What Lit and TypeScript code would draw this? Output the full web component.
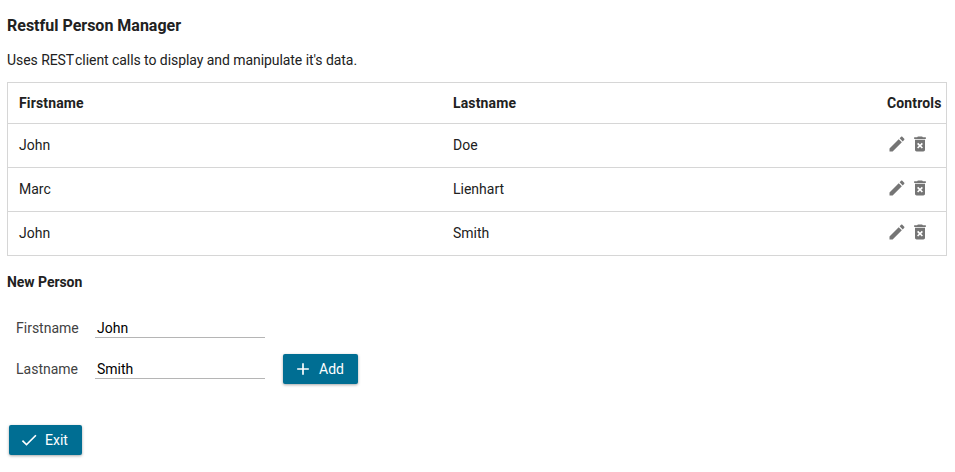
import { LitElement, html, css, svg } from "lit";
import { customElement } from "lit/decorators.js";

const paths = {
  edit: "M3 17.25V21h3.75L17.81 9.94l-3.75-3.75L3 17.25zM20.71 7.04c.39-.39.39-1.02 0-1.41l-2.34-2.34c-.39-.39-1.02-.39-1.41 0l-1.83 1.83 3.75 3.75 1.83-1.83z",
  remove: "M6 19c0 1.1.9 2 2 2h8c1.1 0 2-.9 2-2V7H6v12zm2.46-7.12l1.41-1.41L12 12.59l2.12-2.12 1.41 1.41L13.41 14l2.12 2.12-1.41 1.41L12 15.41l-2.12 2.12-1.41-1.41L10.59 14l-2.13-2.12zM15.5 4l-1-1h-5l-1 1H5v2h14V4z",
  add: "M19 13h-6v6h-2v-6H5v-2h6V5h2v6h6v2z",
  check: "M9 16.17L4.83 12l-1.42 1.41L9 19 21 7l-1.41-1.41z",
};

const icon = (name: keyof typeof paths) =>
  html`<svg class="icon" viewBox="0 0 24 24">${svg`<path d=${paths[name]}></path>`}</svg>`;

const people = [
  ["John", "Doe"],
  ["Marc", "Lienhart"],
  ["John", "Smith"],
];

@customElement("app-root")
export class AppRoot extends LitElement {
  static styles = css`
    :host {
      display: block;
      box-sizing: border-box;
      height: 472px;
      overflow: hidden;
      padding: 16px 8px 0 7px;
      background: #fff;
      color: #212121;
      font: 14px/20px Roboto, sans-serif;
    }
    h1 { margin: 0; font-size: 16px; line-height: 20px; font-weight: 700; }
    h2 { margin: 16px 0 0; font-size: 14px; line-height: 20px; font-weight: 700; letter-spacing: -0.05px; }
    p { margin: 14px 0 12px; line-height: 20px; letter-spacing: -0.06px; }
    .caps { margin-right: -2.5px; }
    .table { border: 1px solid #d6d6d6; width: 938px; }
    .row {
      display: grid;
      grid-template-columns: 434px 434px 1fr;
      align-items: center;
      box-sizing: border-box;
      height: 44px;
      padding: 0 0 2px 11px;
      border-top: 1px solid #d6d6d6;
    }
    .head { height: 40px; padding-bottom: 0; border-top: 0; font-weight: 700; letter-spacing: 0.15px; }
    .controls { display: flex; gap: 3px; padding-bottom: 2px; }
    .icon { display: block; width: 20px; height: 20px; fill: #757575; }
    .form {
      display: grid;
      grid-template-columns: 79px 170px auto;
      justify-content: start;
      align-items: center;
      grid-auto-rows: 41px;
      margin: 15px 0 0 9px;
    }
    label { color: #424242; }
    input {
      box-sizing: border-box;
      width: 170px;
      height: 20px;
      margin: 0;
      padding: 1px 2px 0;
      border: 0;
      border-bottom: 1px solid #b5b5b5;
      border-radius: 0;
      outline: 0;
      background: none;
      color: #000;
      font: 14px/18px Roboto, sans-serif;
    }
    button {
      display: flex;
      align-items: center;
      gap: 6px;
      height: 30px;
      margin: 0;
      padding: 0 14px 0 10px;
      border: 0;
      border-radius: 2px;
      background: #006e93;
      color: #fff;
      font: 14px/20px Roboto, sans-serif;
      box-shadow: 0 1px 3px rgba(0, 0, 0, 0.35);
    }
    button .icon { fill: #fff; }
    .add { width: 75px; margin-left: 18px; }
    .exit { width: 73px; margin: 36px 0 0 2px; }
  `;

  render() {
    return html`
      <h1>Restful Person Manager</h1>
      <p>Uses <span class="caps">REST</span> client calls to display and manipulate it's data.</p>
      <div class="table">
        <div class="row head"><span>Firstname</span><span>Lastname</span><span>Controls</span></div>
        ${people.map(
          ([first, last]) => html`<div class="row">
            <span>${first}</span><span>${last}</span>
            <span class="controls">${icon("edit")}${icon("remove")}</span>
          </div>`
        )}
      </div>
      <h2>New Person</h2>
      <div class="form">
        <label>Firstname</label><input .value=${"John"} /><span></span>
        <label>Lastname</label><input .value=${"Smith"} />
        <button class="add">${icon("add")}<span>Add</span></button>
      </div>
      <button class="exit">${icon("check")}<span>Exit</span></button>
    `;
  }
}
